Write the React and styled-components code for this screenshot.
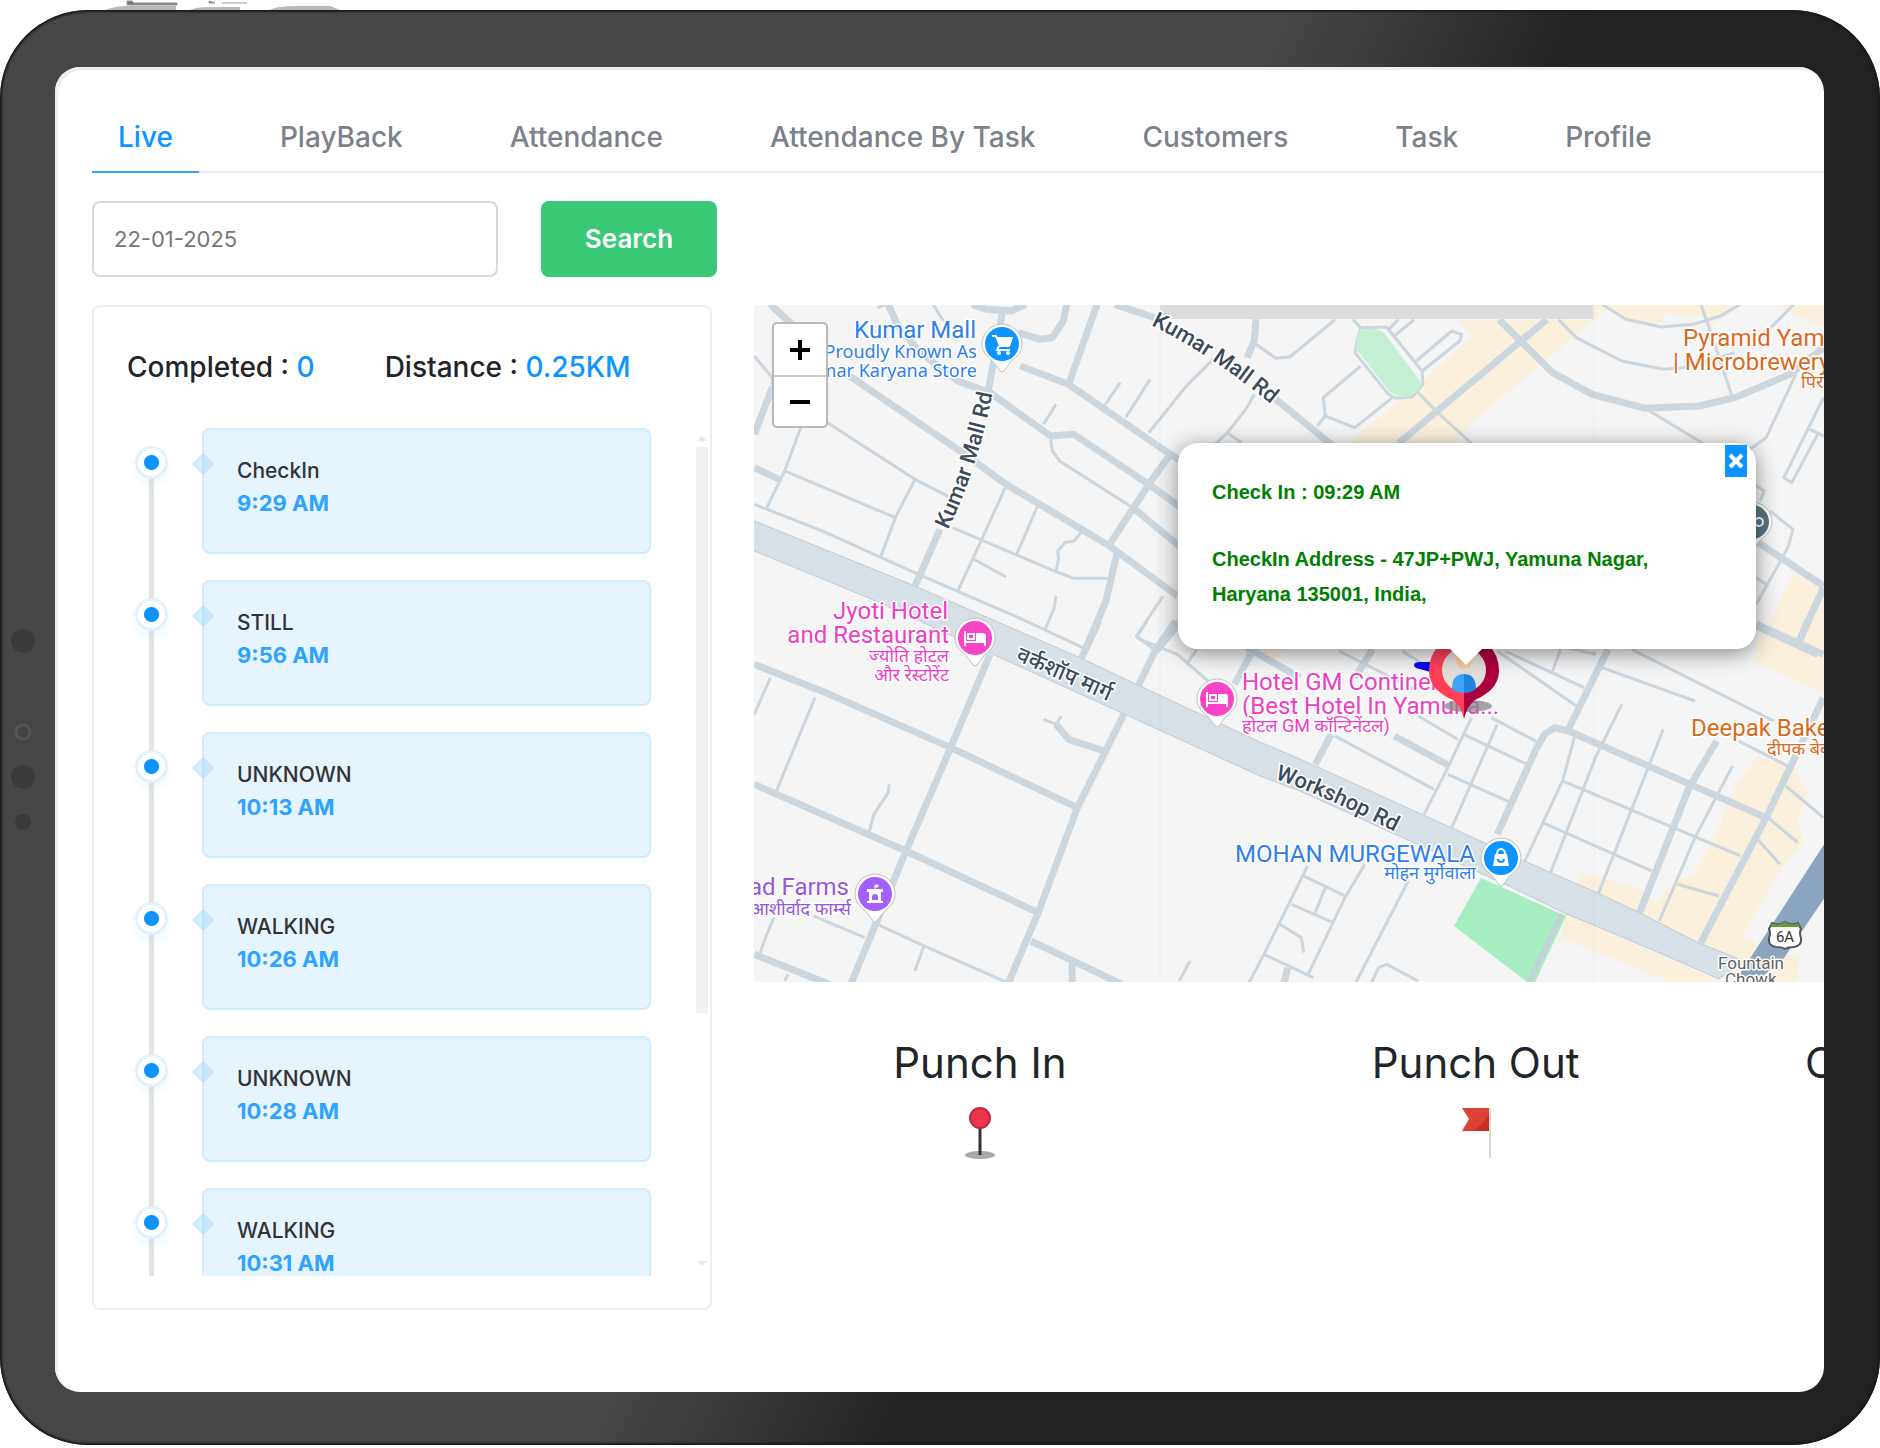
import React, { useState } from "react";
import styled, { createGlobalStyle } from "styled-components";

const GlobalStyle = createGlobalStyle`
  * {
    box-sizing: border-box;
  }
  body {
    margin: 0;
    background: #fff;
    color: #212529;
    font-family: Inter, "Noto Sans", sans-serif;
  }
  ul, ol, p, h2, h3 {
    margin: 0;
    padding: 0;
    list-style: none;
  }
`;

/* device */
const SideKeys = styled.svg`
  display: block;
  height: 10px;
  width: 360px;
`;
const Device = styled.div`
  display: grid;
  grid-template-columns: 55px minmax(0, 1fr) 56px;
  padding: 57px 0 53px;
  border-radius: 88px;
  background: linear-gradient(116deg, #464646 50%, #3e3e3e 53%, #222 62%);
  box-shadow: inset 0 0 2px 2px #1a1a1a;
`;
const Sensors = styled.svg`
  width: 24px;
  height: 202px;
  align-self: center;
  margin-left: 11px;
`;
const Screen = styled.main`
  display: flex;
  flex-direction: column;
  gap: 28px;
  padding: 38px 0 82px 37px;
  border-radius: 25px;
  background: #fff;
  box-shadow: inset 3px 3px 0 #ededed;
  overflow: hidden;
`;

/* top */
const Tabs = styled.nav`
  display: flex;
  gap: 55px;
  border-bottom: 2px solid #e6e8eb;
`;
const Tab = styled.a`
  padding: 16px 26px 18px;
  margin-bottom: -2px;
  border-bottom: 2px solid ${(p) => (p.$active ? "#3ba0ff" : "transparent")};
  color: ${(p) => (p.$active ? "#0d94ff" : "#7c818b")};
  font-size: 28px;
  font-weight: 500;
  line-height: 32px;
  text-decoration: none;
  white-space: nowrap;
`;
const SearchRow = styled.form`
  display: flex;
  gap: 43px;
`;
const DateInput = styled.input`
  width: 406px;
  height: 76px;
  padding: 0 20px;
  border: 2px solid #dadada;
  border-radius: 8px;
  color: #777;
  font-family: inherit;
  font-size: 22px;
`;
const SearchButton = styled.button`
  width: 176px;
  padding: 0 0 2px;
  border: 0;
  border-radius: 8px;
  background: #3ac977;
  color: #fff;
  font-family: inherit;
  font-size: 26px;
  font-weight: 600;
`;
const Body = styled.div`
  display: flex;
  gap: 42px;
`;

/* timeline */
const Panel = styled.section`
  flex: 0 0 620px;
  padding-bottom: 32px;
  border: 2px solid #eee;
  border-radius: 8px;
`;
const Stats = styled.div`
  display: flex;
  gap: 70px;
  padding: 43px 33px 44px;
  font-size: 28px;
  font-weight: 500;
  line-height: 34px;
  white-space: nowrap;
  span {
    color: #0d94ff;
  }
`;
const Scroller = styled.div`
  display: flex;
  height: 848px;
  overflow: hidden;
`;
const Timeline = styled.ol`
  flex: 1;
  padding: 0 43px 0 41px;
`;
const Rail = styled.div`
  width: 33px;
  padding-top: 18px;
  background: linear-gradient(#e3e3e3, #e3e3e3) center bottom / 5px 100% no-repeat;
`;
const Step = styled.li`
  display: flex;
  gap: 34px;
  height: 152px;
  &:first-child ${Rail} {
    background-size: 5px 120px;
  }
`;
const Dot = styled.div`
  width: 33px;
  height: 33px;
  border: 3px solid #e0f1ff;
  border-radius: 50%;
  background: radial-gradient(circle, #0d94ff 7px, #fff 8px);
  box-shadow: 0 6px 10px rgba(13, 148, 255, 0.06);
`;
const Card = styled.div`
  position: relative;
  flex: 1;
  height: 126px;
  padding: 25px 33px;
  border: 2px solid #d0eaff;
  border-radius: 8px;
  background: #e6f4ff;
  &::before {
    content: "";
    position: absolute;
    top: 26px;
    left: -9px;
    width: 16px;
    height: 16px;
    background: rgba(150, 212, 255, 0.42);
    transform: rotate(45deg);
  }
`;
const StepName = styled.h3`
  color: #333;
  font-size: 21px;
  font-weight: 500;
  line-height: 32px;
`;
const StepTime = styled.p`
  color: #2ea3ff;
  font-size: 22px;
  font-weight: 700;
  line-height: 32px;
`;
const ScrollBar = styled.svg`
  width: 16px;
  height: 847px;
`;

/* map */
const MapColumn = styled.section`
  flex: 1;
  min-width: 0;
`;
const MapBox = styled.div`
  position: relative;
  height: 677px;
  overflow: hidden;
  background: #f6f5f6;
`;
const MapSvg = styled.svg`
  display: block;
  width: 100%;
  height: 100%;
  font-family: Roboto, "Noto Sans", sans-serif;
`;
const ZoomControl = styled.div`
  position: absolute;
  top: 17px;
  left: 18px;
  display: grid;
  border: 2px solid #b9b9b9;
  border-radius: 5px;
  background: #fff;
`;
const ZoomButton = styled.button`
  display: grid;
  place-items: center;
  width: 52px;
  height: 51px;
  padding: 0;
  border: 0;
  background: none;
  & + & {
    border-top: 2px solid #ccc;
  }
`;
const Popup = styled.div`
  position: absolute;
  top: 138px;
  left: 424px;
  width: 578px;
  height: 206px;
  padding: 32px 34px;
  border-radius: 20px;
  background: #fff;
  box-shadow: 0 4px 22px rgba(0, 0, 0, 0.45);
  color: green;
  font-family: "Liberation Sans", Arial, sans-serif;
  font-size: 20px;
  font-weight: 700;
  line-height: 35px;
  p + p {
    margin-top: 32px;
  }
  &::after {
    content: "";
    position: absolute;
    top: 205px;
    left: 271px;
    border: 17px solid transparent;
    border-top-color: #fff;
    border-bottom: 0;
  }
`;
const PopupClose = styled.button`
  position: absolute;
  top: 2px;
  right: 9px;
  display: grid;
  place-items: center;
  width: 22px;
  height: 32px;
  padding: 0;
  border: 0;
  background: #0b93ff;
`;

/* legend */
const Legend = styled.ul`
  display: grid;
  grid-template-columns: repeat(3, 45.4%);
  margin: 53px 0 0 -22px;
`;
const LegendItem = styled.li`
  display: grid;
  justify-items: center;
  gap: 15px;
  svg {
    width: 34px;
    height: 54px;
  }
`;
const LegendName = styled.h2`
  font-size: 42px;
  font-weight: 400;
  line-height: 56px;
  white-space: nowrap;
`;

const tabs = ["Live", "PlayBack", "Attendance", "Attendance By Task", "Customers", "Task", "Profile"];

const steps = [
  { name: "CheckIn", time: "9:29 AM" },
  { name: "STILL", time: "9:56 AM" },
  { name: "UNKNOWN", time: "10:13 AM" },
  { name: "WALKING", time: "10:26 AM" },
  { name: "UNKNOWN", time: "10:28 AM" },
  { name: "WALKING", time: "10:31 AM" },
];

// every tile has its own grid, placed on the map by its transform
const tiles = [
  {
    at: "translate(-14 -14) scale(.3571 .3333)",
    land: [],
    main: [
      "85,40 145,100",
      "300,250 630,490 745,580 1035,765 1225,915",
      "415,40 440,100 500,180 610,270 700,305 870,435 935,430 1145,580 1235,650",
      "735,60 725,130 695,300",
      "650,40 690,55 760,60 800,40",
      "785,225 920,280 1205,490 1235,510",
      "1000,40 920,280",
      "915,40 905,90 875,140 840,145 780,125",
      "1050,40 1160,80",
      "1205,490 1145,580 1035,760",
      "1100,650 1235,770",
      "1055,790 1025,930 965,1080",
      "560,715 490,885",
      "1445,85 1440,150 1420,200",
      "40,530 110,565",
      "90,290 40,430",
      "1235,990 1165,1080",
    ],
    lane: [
      "40,195 90,260 90,290",
      "540,40 570,90",
      "385,50 410,40",
      "245,395 490,565 600,625",
      "170,410 125,540 75,650",
      "125,540 435,680",
      "490,565 435,680 395,795",
      "40,640 230,720 500,850 780,980 960,1070",
      "595,710 880,840 935,862 1030,862",
      "745,585 675,750 610,900",
      "835,640 775,790",
      "655,805 745,858",
      "955,725 935,750 910,755 890,780 892,805 885,840",
      "870,445 875,480 895,510 1100,650",
      "885,340 850,400",
      "1065,275 1020,345",
      "1148,265 1080,380",
      "1145,425 1250,285 1325,205",
      "1440,310 1420,350 1365,425 1310,480",
      "1365,425 1405,455",
      "885,915 880,950 855,1015",
      "1185,915 1110,1035 1165,1080",
    ],
  },
  {
    at: "translate(506 -14) scale(.3954 .3333)",
    land: [
      "500,86 535,140 225,457 495,457 530,400 870,60 880,40 840,40 840,86",
      "865,40 950,97 1020,97 1025,68 1130,78 1140,105 1215,40",
      "1300,40 1425,112 1425,40",
      "1350,850 1425,890 1425,1080 1250,1080",
    ],
    main: [
      "605,86 740,245 840,310 975,352 1110,345 1200,320 1340,250 1425,170",
      "725,86 655,155 350,457",
      "40,325 190,470",
      "1260,755 1425,885",
      "1425,890 1360,1060",
      "1255,1000 1425,1090",
    ],
    lane: [
      "190,86 75,198 40,202 -10,160",
      "235,86 255,110",
      "350,86 325,115",
      "390,86 340,135",
      "395,210 485,120 510,130 505,150 410,240",
      "255,225 160,320 165,375 240,410 335,320",
      "165,375 145,405",
      "400,305 445,360 535,457",
      "755,86 800,140 915,210 1020,235 1070,230 1200,185",
      "865,40 925,85 1015,108 1095,100 1165,75 1215,40",
      "1115,40 1130,90 1150,160 1195,320",
      "1350,40 1250,160",
      "985,360 1120,457",
      "1355,250 1280,440 1240,475",
      "1425,320 1325,560 1345,575 1410,430",
      "1390,415 1425,435",
      "1250,580 1275,600 1265,630",
      "1290,660 1348,715 1335,770 1255,940",
      "1255,860 1280,880",
      "255,110 320,108 410,240 412,280 385,318 345,322 325,310 240,185 245,150 255,110",
    ],
  },
  {
    at: "translate(-14 316) scale(.3571 .3333)",
    land: ["1395,85 1520,85 1500,120 1450,105"],
    main: [
      "40,130 240,215 590,380 945,560",
      "40,490 465,690 835,875",
      "700,100 590,380 465,690 310,1090",
      "1075,280 945,560 835,875 750,1090",
      "40,1000 250,1090",
      "885,310 920,355 1020,390",
      "1005,0 955,115",
      "1220,0 1165,85 1115,195",
      "930,1025 930,1090",
      "815,960 1070,1090",
      "1430,100 1385,190",
      "1420,80 1568,170",
    ],
    lane: [
      "85,170 40,280",
      "210,230 100,515",
      "418,490 415,515 375,580 360,640",
      "205,885 350,950",
      "95,890 75,940 55,1000",
      "385,910 515,975 760,1090",
      "515,975 490,1050",
      "135,1060 125,1080",
      "850,295 885,310 900,285",
      "1260,1020 1230,1080",
      "1110,50 1225,100 1310,180",
      "1280,85 1250,130",
      "1140,0 1110,50",
    ],
  },
  {
    at: "translate(506 316) scale(.3954 .3333)",
    land: [
      "1290,0 1425,0 1425,215 1250,125",
      "1260,405 1350,440 1385,515 1360,600 1375,660 1320,740 1220,945 1270,980 1365,1010 1355,1090 1200,1090 1110,960 1000,920 1090,780 1160,620 1200,500",
      "810,755 960,800 1000,850 1050,780 1110,760 1200,990 1100,970 850,815 805,790",
      "770,875 1180,1090 1050,1090 760,950",
    ],
    main: [
      "285,85 240,170",
      "180,340 140,430",
      "340,345 480,435",
      "880,85 780,325",
      "600,640 700,380 720,340 745,320 780,330 1280,590",
      "1155,360 1085,500 960,875",
      "1425,230 1280,590 1115,965",
      "1255,15 1410,100",
      "1385,0 1365,60",
      "70,1040 60,1090",
    ],
    lane: [
      "200,90 400,210",
      "360,90 440,150",
      "600,90 800,255",
      "620,90 820,200",
      "760,85 740,150",
      "700,60 850,100",
      "585,290 705,365",
      "535,290 475,440 415,580",
      "600,310 485,620",
      "515,340 675,430",
      "475,460 635,545",
      "190,345 440,505",
      "400,285 500,355",
      "865,140 1100,240",
      "940,85 1300,300",
      "915,250 850,405 735,755",
      "795,350 765,480 670,720",
      "1020,325 855,820",
      "765,480 1215,705",
      "715,605 990,750",
      "1195,435 1100,650 1010,900",
      "1055,790 1160,825",
      "1210,360 1335,435",
      "1330,495 1425,590",
      "1285,590 1360,665",
      "1255,650 1315,730",
      "110,765 215,825",
      "80,850 185,905",
      "165,800 140,875",
      "120,735 10,1000 -30,1090",
      "265,730 215,830 120,1065",
      "10,1000 135,1070",
      "375,780 240,1090",
      "50,910 105,950 110,995",
      "280,1090 300,1040 320,1030 400,1080",
    ],
  },
];

const BLUE = "#2f80ec";
const PINK = "#ec3fc3";
const PURPLE = "#9656e0";
const ORANGE = "#dc691b";

const labels = [
  { x: 222, y: 33, size: 24, color: BLUE, end: true, text: "Kumar Mall" },
  { x: 223, y: 53, size: 18, color: BLUE, end: true, noto: true, text: "(Proudly Known As" },
  { x: 223, y: 72, size: 18, color: BLUE, end: true, noto: true, text: "Kumar Karyana Store" },
  { x: 194, y: 314, size: 24, color: PINK, end: true, text: "Jyoti Hotel" },
  { x: 195, y: 338, size: 24, color: PINK, end: true, text: "and Restaurant" },
  { x: 195, y: 357, size: 18, color: PINK, end: true, text: "ज्योति होटल" },
  { x: 195, y: 376, size: 18, color: PINK, end: true, text: "और रेस्टोरेंट" },
  { x: 488, y: 385, size: 24, color: PINK, text: "Hotel GM Continental" },
  { x: 488, y: 409, size: 24, color: PINK, text: "(Best Hotel In Yamuna..." },
  { x: 488, y: 427, size: 18, color: PINK, text: "होटल GM कॉन्टिनेंटल)" },
  { x: 95, y: 590, size: 24, color: PURPLE, end: true, text: "Ashirwad Farms" },
  { x: 97, y: 610, size: 18, color: PURPLE, end: true, text: "आशीर्वाद फार्म्स" },
  { x: 721, y: 557, size: 24, color: BLUE, end: true, text: "MOHAN MURGEWALA" },
  { x: 722, y: 574, size: 18, color: BLUE, end: true, text: "मोहन मुर्गेवाला" },
  { x: 929, y: 41, size: 24, color: ORANGE, text: "Pyramid Yamuna" },
  { x: 919, y: 65, size: 24, color: ORANGE, text: "| Microbrewery" },
  { x: 1047, y: 83, size: 18, color: ORANGE, text: "पिरामिड" },
  { x: 937, y: 431, size: 24, color: ORANGE, text: "Deepak Bakery" },
  { x: 1013, y: 450, size: 18, color: ORANGE, text: "दीपक बेकरी" },
  { x: 964, y: 664, size: 17, color: "#5f6368", text: "Fountain" },
  { x: 971, y: 680, size: 17, color: "#5f6368", text: "Chowk" },
];

const Pin = ({ x, y, color, children }) => (
  <g transform={`translate(${x} ${y})`}>
    <path
      d="M0 -20a20 20 0 0 1 20 20c0 10 -8 14 -13 20q-3 4 -5 7q-2 2 -4 0q-2 -3 -5 -7c-5 -6 -13 -10 -13 -20a20 20 0 0 1 20 -20z"
      fill="#fff"
      stroke="#c0c0c0"
    />
    <circle r="17" fill={color} />
    {children}
  </g>
);

const BedIcon = () => (
  <g fill="none" stroke="#fff" strokeWidth="2">
    <path d="M-10 -7V8M-10 4H10M10 0V8" />
    <rect x="-7" y="-4" width="6" height="5" />
    <path d="M1 -5H8q3 0 3 3V4H1z" fill="#fff" stroke="none" />
  </g>
);

const MapDrawing = () => (
  <MapSvg viewBox="0 0 1071 677" preserveAspectRatio="xMinYMin slice" role="img" aria-label="Map">
    <defs>
      <path id="rd1" d="M194 225Q226 158 240 80" />
      <path id="rd2" d="M397 20Q462 52 530 110" />
      <path id="rd3" d="M261 355L372 404" />
      <path id="rd4" d="M521 474Q585 496 665 540" />
    </defs>
    {tiles.map((tile) => (
      <g key={tile.at} transform={tile.at} fill="#faf0dc">
        {tile.land.map((pts) => (
          <polygon key={pts} points={pts} />
        ))}
      </g>
    ))}
    {tiles.map((tile) => (
      <g key={tile.at} transform={tile.at} fill="none" stroke="#cbd6df" strokeLinejoin="round">
        {tile.lane.map((pts) => (
          <polyline key={pts} points={pts} strokeWidth="3" vectorEffect="non-scaling-stroke" />
        ))}
        {tile.main.map((pts) => (
          <polyline key={pts} points={pts} strokeWidth="7" vectorEffect="non-scaling-stroke" />
        ))}
      </g>
    ))}
    {/* parks */}
    <path d="M604 26q4 -3 18 -2l8 4 36 48q2 8 -6 13t-16 2l-8 -4 -33 -42q-2 -8 1 -19z" fill="#c3f0d4" />
    <path d="M727 573L812 611 781 677H773L700 621z" fill="#a6edc1" />
    <path d="M808 609L775 677" stroke="#c6d0d9" strokeWidth="5" />
    {/* highway */}
    <path d="M1071 538V592L1030 653 1008 672H984z" fill="#8ba4c0" />
    <path
      d="M-2 215L161 281 329 354 386 381 506 437 546 454 731 538 775 558 846 589 886 608 945 638 990 656 965 674 901 646 842 621 810 608 759 583 656 536 546 486 506 471 368 408 238 349 122 296 -2 245z"
      fill="#d7dfe7"
      stroke="#c0cad2"
    />
    <path d="M406 0V678M840 0V678" stroke="#000" strokeOpacity=".035" />
    <rect x="406" width="433" height="14" fill="#dcdcdc" />

    {/* road names */}
    <g fill="#3c4a5a" stroke="#fff" strokeWidth="3" paintOrder="stroke" fontSize="22" fontWeight="500">
      <text><textPath href="#rd1">Kumar Mall Rd</textPath></text>
      <text><textPath href="#rd2">Kumar Mall Rd</textPath></text>
      <text><textPath href="#rd3">वर्कशॉप मार्ग</textPath></text>
      <text><textPath href="#rd4">Workshop Rd</textPath></text>
    </g>
    {labels.map((l) => (
      <text
        key={l.text}
        x={l.x}
        y={l.y}
        fontSize={l.size}
        fontFamily={l.noto ? "Noto Sans" : undefined}
        fill={l.color}
        textAnchor={l.end ? "end" : "start"}
        stroke="#fff"
        strokeWidth="3"
        strokeLinejoin="round"
        paintOrder="stroke"
      >
        {l.text}
      </text>
    ))}

    {/* places */}
    <Pin x={248} y={39} color="#0d94ff">
      <path d="M-10 -8h4l4 10H7l3 -8H-5" fill="#fff" stroke="#fff" strokeWidth="2" strokeLinejoin="round" />
      <path d="M-3 2l-2 4H8" fill="none" stroke="#fff" strokeWidth="2" />
      <circle cx="-3" cy="9" r="2" fill="#fff" />
      <circle cx="6" cy="9" r="2" fill="#fff" />
    </Pin>
    <Pin x={221} y={333} color="#f944c8"><BedIcon /></Pin>
    <Pin x={463} y={394} color="#f944c8"><BedIcon /></Pin>
    <Pin x={121} y={589} color="#a55eff">
      <path d="M-8 -5H8v3H6V7h2v2H-8V7h2v-9h-2z" fill="#fff" />
      <path d="M0 -4v-5h3v2h-3" fill="#fff" stroke="#fff" />
      <path d="M-3 6v-3a3 3 0 0 1 6 0v3z" fill="#a55eff" />
    </Pin>
    <Pin x={747} y={553} color="#0d94ff">
      <path d="M-6 -4H6L8 8H-8z" fill="#fff" />
      <path d="M-4 -4a4 5 0 0 1 8 0" fill="none" stroke="#fff" strokeWidth="2" />
      <path d="M-3 1a3 3 0 0 0 6 0" fill="none" stroke="#0d94ff" strokeWidth="2" />
    </Pin>
    <Pin x={998} y={217} color="#5b7686">
      <circle cx="7" r="4" fill="none" stroke="#fff" strokeWidth="2" />
    </Pin>

    {/* route shield */}
    <g transform="translate(1031 630)">
      <path d="M-13 -12q6 3 13 -1q7 4 13 1l3 6q-2 4 0 9q1 8 -7 9q-6 0 -9 2q-3 -2 -9 -2q-8 -1 -7 -9q2 -5 0 -9z" fill="#fff" stroke="#555" strokeWidth="2" />
      <path d="M-13 -12q6 3 13 -1q7 4 13 1l2 4H-15z" fill="#5f9e33" />
      <text y="7" fontSize="15" textAnchor="middle" fill="#333">6A</text>
    </g>

    {/* employee marker */}
    <path d="M680 357h-14q-6 0 -6 3t6 4l14 4z" fill="#0a0af5" />
    <ellipse cx="714" cy="401" rx="24" ry="6" fill="#888" fillOpacity=".75" />
    <path d="M710 330a35 35 0 0 0 -35 35c0 16 11 24 24 30q8 6 11 19z" fill="#ff4057" />
    <path d="M710 330a35 35 0 0 1 35 35c0 16 -11 24 -24 30q-8 6 -11 19z" fill="#ad0040" />
    <circle cx="710" cy="365" r="22" fill="#e2ded9" />
    <circle cx="710" cy="356" r="8" fill="#f3c9a2" />
    <path d="M698 384q0 -15 12 -15v19q-7 0 -12 -4z" fill="#3fa2f7" />
    <path d="M722 384q0 -15 -12 -15v19q7 0 12 -4z" fill="#1f86dd" />
  </MapSvg>
);

const PunchInIcon = () => (
  <svg viewBox="0 0 34 54" aria-hidden="true">
    <ellipse cx="17" cy="49" rx="15" ry="4" fill="#a9a9a9" />
    <path d="M17 20V49" stroke="#333" strokeWidth="3" />
    <circle cx="17" cy="12" r="10" fill="#ef3349" stroke="#b92a45" strokeWidth="2" />
  </svg>
);

const PunchOutIcon = () => (
  <svg viewBox="0 0 34 54" aria-hidden="true">
    <path d="M31 2V52" stroke="#d9d9d9" strokeWidth="2" />
    <path d="M3 2H30V25H3L10 13z" fill="#dd4335" />
    <path d="M30 8V25H12Q24 20 30 8z" fill="#c62f25" />
  </svg>
);

const App = () => {
  const [active, setActive] = useState("Live");
  const [date, setDate] = useState("22-01-2025");

  return (
    <>
      <GlobalStyle />
      <SideKeys viewBox="0 0 360 10" aria-hidden="true">
        <path d="M105 10Q115 6 127 6H176V10zM190 10Q196 7 210 7H240V10zM270 10Q276 6 300 6H330L340 10z" fill="#b9b9b9" />
        <path d="M127 1h5l2 2h43v2h-50zM209 1l6 2h-6zM222 3h25" fill="#777" stroke="#999" />
      </SideKeys>
      <Device>
        <Sensors viewBox="0 0 24 202" aria-hidden="true">
          <circle cx="12" cy="12" r="12" fill="#3a3a3a" />
          <circle cx="12" cy="103" r="7" fill="#444" stroke="#555" strokeWidth="3" />
          <circle cx="12" cy="148" r="12" fill="#3a3a3a" />
          <circle cx="12" cy="193" r="8" fill="#3a3a3a" />
        </Sensors>
        <Screen>
          <Tabs>
            {tabs.map((name) => (
              <Tab
                key={name}
                href={`#${name.replaceAll(" ", "-").toLowerCase()}`}
                $active={name === active}
                onClick={() => setActive(name)}
              >
                {name}
              </Tab>
            ))}
          </Tabs>
          <SearchRow onSubmit={(e) => e.preventDefault()}>
            <DateInput aria-label="Date" value={date} onChange={(e) => setDate(e.target.value)} />
            <SearchButton type="submit">Search</SearchButton>
          </SearchRow>
          <Body>
            <Panel>
              <Stats>
                <p>Completed : <span>0</span></p>
                <p>Distance : <span>0.25KM</span></p>
              </Stats>
              <Scroller>
                <Timeline>
                  {steps.map((step) => (
                    <Step key={step.time}>
                      <Rail>
                        <Dot />
                      </Rail>
                      <Card>
                        <StepName>{step.name}</StepName>
                        <StepTime>{step.time}</StepTime>
                      </Card>
                    </Step>
                  ))}
                </Timeline>
                <ScrollBar viewBox="0 0 16 847" aria-hidden="true">
                  <path d="M3 13L8 8L13 13z" fill="#e6e8e9" />
                  <rect x="2" y="19" width="12" height="566" fill="#eff1f2" />
                  <path d="M3 833L8 838L13 833z" fill="#e6e8e9" />
                </ScrollBar>
              </Scroller>
            </Panel>
            <MapColumn>
              <MapBox>
                <MapDrawing />
                <ZoomControl>
                  <ZoomButton aria-label="Zoom in">
                    <svg width="24" height="24" viewBox="0 0 24 24"><path d="M12 2V22M2 12H22" stroke="#000" strokeWidth="4" /></svg>
                  </ZoomButton>
                  <ZoomButton aria-label="Zoom out">
                    <svg width="24" height="24" viewBox="0 0 24 24"><path d="M2 12H22" stroke="#000" strokeWidth="4" /></svg>
                  </ZoomButton>
                </ZoomControl>
                <Popup>
                  <p>Check In : 09:29 AM</p>
                  <p>CheckIn Address - 47JP+PWJ, Yamuna Nagar, Haryana 135001, India,</p>
                  <PopupClose aria-label="Close">
                    <svg width="16" height="16" viewBox="0 0 16 16"><path d="M2 2L14 14M14 2L2 14" stroke="#fff" strokeWidth="4" /></svg>
                  </PopupClose>
                </Popup>
              </MapBox>
              <Legend>
                <LegendItem>
                  <LegendName>Punch In</LegendName>
                  <PunchInIcon />
                </LegendItem>
                <LegendItem>
                  <LegendName>Punch Out</LegendName>
                  <PunchOutIcon />
                </LegendItem>
                <LegendItem>
                  <LegendName>Current Location</LegendName>
                </LegendItem>
              </Legend>
            </MapColumn>
          </Body>
        </Screen>
      </Device>
    </>
  );
};

export default App;
